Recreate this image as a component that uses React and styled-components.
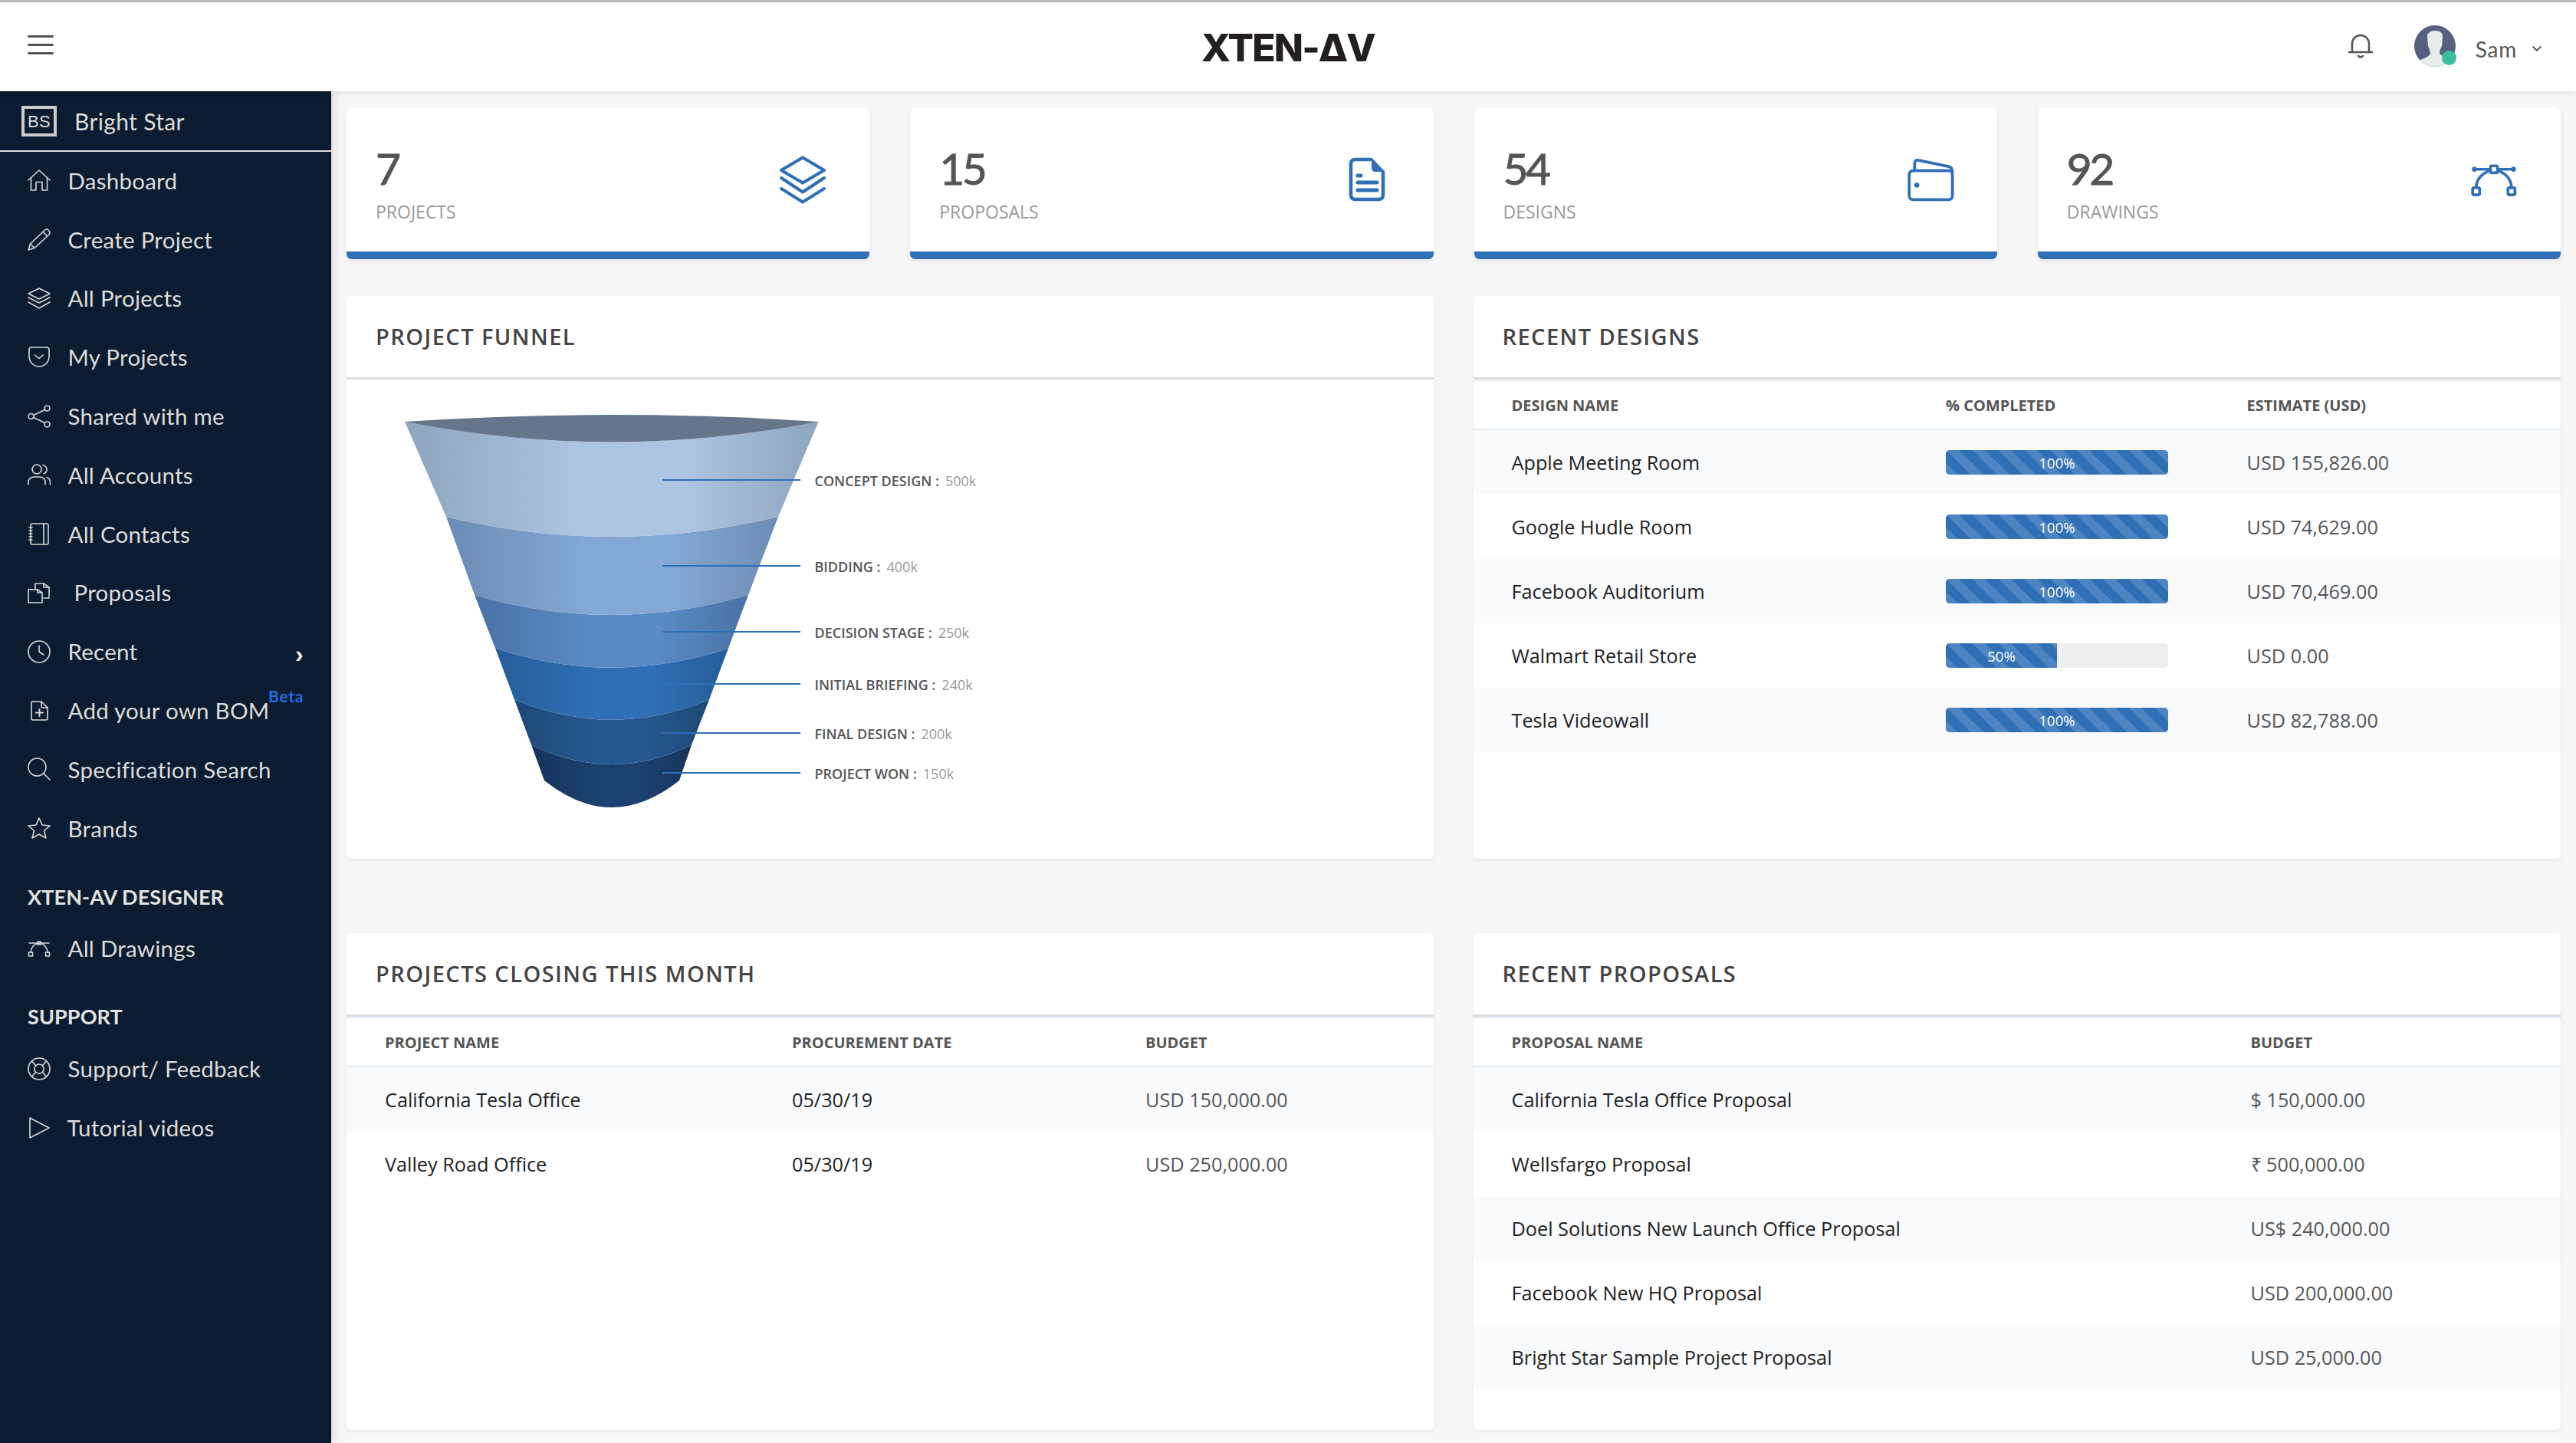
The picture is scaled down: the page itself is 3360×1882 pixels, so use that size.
import React from "react";
import styled, { createGlobalStyle } from "styled-components";

const Global = createGlobalStyle`
  html, body { margin: 0; padding: 0; background: #f7f7f7; }
  body { font-family: "Open Sans", "Liberation Sans", sans-serif; }
  * { box-sizing: border-box; }
`;

const BLUE = "#2f6fb6";
const NAVF = `"Lato", "Open Sans", sans-serif`;

const Page = styled.div`
  width: 3360px; height: 1882px; overflow: hidden;
  display: flex; flex-direction: column; background: #f7f7f7;
`;
const TopBar = styled.header`
  height: 119px; flex: none; background: #fff; border-top: 3px solid #b8b8b8;
  display: grid; grid-template-columns: 1fr auto 1fr; align-items: center;
  box-shadow: 0 2px 8px rgba(0,0,0,.1); position: relative; z-index: 2;
  padding: 0 36px;
`;
const Burger = styled.div`
  width: 34px; display: flex; flex-direction: column; gap: 8px; margin-top: -5px;
  span { display: block; height: 3px; border-radius: 2px; background: #555; }
`;
const Logo = styled.div`
  font-family: "Inter", "Liberation Sans", sans-serif; font-weight: 800; font-size: 50px;
  letter-spacing: -1.9px; color: #231f20; line-height: 1; margin-top: 2px;
  width: 224px; white-space: nowrap; display: flex; justify-content: center;
`;
const UserArea = styled.div`
  justify-self: end; display: flex; align-items: center; margin-right: 9px; margin-top: -3px;
`;
const AvatarWrap = styled.div`
  position: relative; width: 54px; height: 56px; margin-left: 53px; margin-right: 26px;
`;
const Online = styled.span`
  position: absolute; right: -1px; bottom: 3px; width: 19px; height: 19px; border-radius: 50%;
  background: #3bbf9c;
`;
const UserName = styled.span`
  font-family: ${NAVF}; font-size: 28px; color: #555; letter-spacing: .8px; margin-right: 20px; margin-top: 8px;
`;
const Body = styled.div`
  flex: 1; display: flex; min-height: 0;
`;
const Side = styled.aside`
  width: 432px; flex: none; background: #0c1c30; color: #dcdcdc; font-family: ${NAVF};
  box-shadow: 0 0 14px rgba(0,0,0,.18); position: relative; z-index: 1;
`;
const Brand = styled.div`
  height: 79px; display: flex; align-items: center; gap: 23px; padding-left: 28px;
  border-bottom: 2px solid #dcdcdc; font-size: 30px; letter-spacing: .35px;
`;
const BrandBox = styled.span`
  width: 46px; height: 40px; border: 4px solid #ccc; display: flex; align-items: center; justify-content: center;
  font-family: "Liberation Sans", sans-serif; font-size: 22px; padding-top: 3px; color: #ddd;
`;
const NavItem = styled.div`
  height: 76.8px; display: flex; align-items: center; padding: 0 0 2px 36px; font-size: 29.5px; letter-spacing: .25px;
  position: relative;
  svg { flex: none; }
`;
const NavLabel = styled.span`
  margin-left: ${p => 22.5 + (p.$indent || 0)}px; white-space: nowrap;
`;
const Chevron = styled.span`
  position: absolute; left: 385px; top: 23px; font-size: 32px; font-weight: 700; font-family: "Liberation Sans", sans-serif; color: #eee;
`;
const Beta = styled.span`
  position: absolute; left: 350px; top: 6px; font-size: 21px; font-weight: 700; color: #1f6fe8; letter-spacing: .7px;
`;
const SectionTitle = styled.div`
  height: 40px; line-height: 40px; padding-left: 36px; font-size: 27px; font-weight: 700; letter-spacing: .1px;
  margin-top: ${p => p.$top}px; margin-bottom: 10px; color: #e2e2e2;
`;
const Main = styled.main`
  flex: 1; padding: 21px 20px 0; min-width: 0;
`;
const StatRow = styled.div`
  display: grid; grid-template-columns: repeat(4, 1fr); column-gap: 53px; margin-bottom: 48px;
`;
const Stat = styled.section`
  height: 198px; background: #fff; border-bottom: 10px solid ${BLUE}; border-radius: 7px;
  box-shadow: 0 3px 6px rgba(0,0,0,.08);
  display: flex; align-items: center; justify-content: space-between; padding: 0 56px 0 38px;
`;
const StatNum = styled.div`
  font-family: "Lato", sans-serif; font-weight: 400; font-size: 57px; line-height: 1; color: #555; letter-spacing: -3.5px;
  -webkit-text-stroke: .9px #555; margin-top: 11px;
`;
const StatLabel = styled.div`
  font-size: 23px; color: #999; line-height: 1; margin-top: 17px;
`;
const IconSlot = styled.div`
  width: 62px; display: flex; justify-content: center; color: ${BLUE};
`;
const Grid = styled.div`
  display: grid; grid-template-columns: 1418px 1418px; grid-template-rows: 734px 648px; column-gap: 51.5px; row-gap: 97px;
`;
const Panel = styled.section`
  background: #fff; border-radius: 6px; box-shadow: 0 2px 5px rgba(0,0,0,.07); overflow: hidden;
`;
const PanelHead = styled.h2`
  margin: 0; padding: 0 38px 2px; display: flex; align-items: center; box-sizing: content-box; height: 104px;
  font-size: 29px; font-weight: 600; color: #444; letter-spacing: 1.45px; border-bottom: 3px solid #dedede;
`;
const Chart = styled.svg`
  display: block; width: 100%; height: 624px;
`;
const Cols = styled.div`
  display: grid; grid-template-columns: ${p => p.$cols}; padding-left: 50px; align-items: center;
`;
const THead = styled(Cols)`
  font-size: 20px; font-weight: 700; color: #555; border-top: 2px solid #e4edf5;
  border-bottom: 2px solid #e4edf5; height: 65.5px; padding-top: 1px;
`;
const TRow = styled(Cols)`
  height: 84px; font-size: 25.25px; color: #555;
  &:nth-child(odd) { background: #f9fafc; }
`;
const Name = styled.span`
  color: #222;
`;
const Bar = styled.div`
  width: 290px; height: 32px; background: #eee; border-radius: 5px; overflow: hidden; display: flex;
`;
const Fill = styled.div`
  height: 100%; background-color: ${BLUE}; color: #fff; font-size: 18.5px; line-height: 33px; text-align: center;
  background-image: linear-gradient(45deg, rgba(255,255,255,.15) 25%, transparent 25%, transparent 50%, rgba(255,255,255,.15) 50%, rgba(255,255,255,.15) 75%, transparent 75%, transparent);
  background-size: 34px 34px;
`;

const Ico = ({ children, w = 30, h = 30 }) => (
  <svg width={w} height={h} viewBox="0 0 30 30" fill="none" stroke="#d8d8d8" strokeWidth="1.6" strokeLinecap="round" strokeLinejoin="round">{children}</svg>
);
const navIcons = {
  home: <><path d="M1 15 L15 2 L29 15" /><path d="M4.5 12.5 V28 H11 V17.5 H19 V28 H25.5 V12.5" /></>,
  pencil: <><path d="M1 29 L3.5 21 L22.5 3 Q25 1 27 3 L28.5 5 Q30 7.5 27.5 9.5 L9 26.5 Z" /><path d="M3.5 21 L9 26.5 M20 5.5 L25.5 11" /></>,
  layers: <><path d="M15 2 L29 9 L15 16 L1 9 Z" /><path d="M1 14 L15 21 L29 14" /><path d="M1 20 L15 28 L29 20" /></>,
  pocket: <><path d="M5 2 H25 Q28 2 28 5 V14 A13 13 0 0 1 2 14 V5 Q2 2 5 2 Z" /><path d="M9.5 12 L15 16.5 L20.5 12" /></>,
  share: <><circle cx="25.5" cy="4.5" r="3.5" /><circle cx="4.5" cy="15" r="3.5" /><circle cx="25.5" cy="25.5" r="3.5" /><path d="M22.5 6.5 L7.5 13.5 M7.5 16.5 L22.5 23.5" /></>,
  users: <><circle cx="12" cy="8" r="6" /><path d="M1 28 V25 Q1 18 9 18 H15 Q23 18 23 25 V28" /><path d="M20 2.5 Q25 4 25 8 Q25 12 21 14" /><path d="M25 18.5 Q29.5 20.5 29.5 25 V28" /></>,
  contacts: <><rect x="4" y="2" width="23" height="27" rx="2" /><path d="M21 2 V29 M2 7 H6 M2 11 H6 M2 15 H6 M2 19 H6 M2 23 H6" /></>,
  files: <><path d="M1 11 H13 L19 15 V28 H1 Z" /><path d="M13 11 V15 H19" /><path d="M10 10 V3 H21 L28 8 V22 H21" /><path d="M21 3 V8 H28" /></>,
  clock: <><circle cx="15" cy="15" r="14" /><path d="M15 7 V15 L21 19" /></>,
  add: <><path d="M18 3 H7 Q5 3 5 5 V25 Q5 27 7 27 H24 Q26 27 26 25 V11" /><path d="M18 3 L26 11 H20 Q18 11 18 9 Z" /><path d="M15.5 13 V22 M11 17.5 H20" strokeWidth="2" /></>,
  search: <><circle cx="12.5" cy="12.5" r="11.5" /><path d="M21 21 L29 29" /></>,
  star: <path d="M15 2 L19 11 L29 12 L21.5 18.5 L24 28 L15 23 L6 28 L8.5 18.5 L1 12 L11 11 Z" />,
  bezier: <><path d="M4 20 C4.5 12 9 9 15 8 C21 9 25.5 12 26 20 M2 8 H28" /><rect x="1.5" y="20" width="5" height="5" /><rect x="23.5" y="20" width="5" height="5" /><rect x="13" y="6" width="4" height="4" /></>,
  buoy: <><circle cx="15" cy="15" r="14" /><circle cx="15" cy="15" r="6" /><path d="M5.5 5 L10.5 10.5 M24.5 5 L19.5 10.5 M5.5 25 L10.5 19.5 M24.5 25 L19.5 19.5" /></>,
  play: <path d="M3 2 L28 15 L3 28 Z" />,
};

const nav1 = [
  ["home", "Dashboard"], ["pencil", "Create Project"], ["layers", "All Projects"], ["pocket", "My Projects"],
  ["share", "Shared with me"], ["users", "All Accounts"], ["contacts", "All Contacts"], ["files", "Proposals", 8],
  ["clock", "Recent", 0, "chev"], ["add", "Add your own BOM", 0, "beta"], ["search", "Specification Search"], ["star", "Brands"],
];

const NavRow = ({ icon, label, indent, extra }) => (
  <NavItem>
    <Ico>{navIcons[icon]}</Ico>
    <NavLabel $indent={indent}>{label}</NavLabel>
    {extra === "chev" && <Chevron>›</Chevron>}
    {extra === "beta" && <Beta>Beta</Beta>}
  </NavItem>
);

const StackIcon = () => (
  <svg width="62" height="63" viewBox="0 0 62 63" fill="none" stroke="currentColor" strokeWidth="4" strokeLinecap="round" strokeLinejoin="round">
    <path d="M31 2.5 L59 19 L31 35.5 L3 19 Z" /><path d="M3 29 L31 47.5 L59 29" /><path d="M3 43 L31 60.5 L59 43" />
  </svg>
);
const DocIcon = () => (
  <svg width="48" height="58" viewBox="0 0 48 58" fill="none" stroke="currentColor" strokeWidth="4.5" strokeLinecap="round" strokeLinejoin="round">
    <path d="M29 3 H9 Q3 3 3 9 V49 Q3 55 9 55 H39 Q45 55 45 49 V19" />
    <path d="M31 3 L45 18 H35 Q31 18 31 14 Z" fill="currentColor" strokeWidth="2" />
    <path d="M12 24 H16 M12 33 H37 M12 43 H37" strokeWidth="5" />
  </svg>
);
const WalletIcon = () => (
  <svg width="66" height="60" viewBox="14 13 66 60" fill="none" stroke="currentColor" strokeWidth="4" strokeLinecap="round" strokeLinejoin="round">
    <rect x="17.5" y="31" width="60" height="40" rx="5" />
    <path d="M25 30 V21 Q25 15 31 16.5 L72 25 Q77 26 77.5 32" />
    <circle cx="28" cy="51" r="3.5" fill="currentColor" stroke="none" />
  </svg>
);
const BezierIcon = () => (
  <svg width="68" height="50" viewBox="14 18 68 50" fill="none" stroke="currentColor" strokeWidth="4" strokeLinejoin="round">
    <path d="M20 28.5 H76" />
    <circle cx="20" cy="28.5" r="3.5" fill="currentColor" stroke="none" />
    <circle cx="76" cy="28.5" r="3.5" fill="currentColor" stroke="none" />
    <path d="M22.5 55 C22.5 42 32 32 48 29 C64 32 73 42 73 55" />
    <rect x="43" y="23.5" width="10" height="10" rx="2" fill="#fff" />
    <rect x="17.5" y="55" width="10" height="10" rx="2" fill="#fff" />
    <rect x="68" y="55" width="10" height="10" rx="2" fill="#fff" />
  </svg>
);

const stats = [
  ["7", "PROJECTS", <StackIcon />], ["15", "PROPOSALS", <DocIcon />],
  ["54", "DESIGNS", <WalletIcon />], ["92", "DRAWINGS", <BezierIcon />],
];

const segs = [
  { id: "s6", d: "M693 971.5 Q798 1022.5 902 971.5 L886 1018 Q798 1088 710 1018 Z", c: "#1b4170", e: "#16345b" },
  { id: "s5", d: "M671 912.5 Q798 965 925 912.5 L902 971.5 Q798 1022.5 693 971.5 Z", c: "#25588f", e: "#1e4875" },
  { id: "s4", d: "M646 845.6 Q798 896 950 845.6 L925 912.5 Q798 965 671 912.5 Z", c: "#2f6fb6", e: "#275c98" },
  { id: "s3", d: "M619 776 Q798 828 976 776 L950 845.6 Q798 896 646 845.6 Z", c: "#5a8ac6", e: "#4a72a5" },
  { id: "s2", d: "M582 674 Q798 726 1015 674 L976 776 Q798 828 619 776 Z", c: "#84a8d5", e: "#6b8cb3" },
  { id: "s1", d: "M528 550 Q798 603 1067.5 550 L1015 674 Q798 726 582 674 Z", c: "#adc4e2", e: "#8ea5bf" },
];
const funnelLabels = [
  [626, "CONCEPT DESIGN :", "500k"], [738, "BIDDING :", "400k"], [824, "DECISION STAGE :", "250k"],
  [892, "INITIAL BRIEFING :", "240k"], [956, "FINAL DESIGN :", "200k"], [1008, "PROJECT WON :", "150k"],
];

const Funnel = () => (
  <Chart viewBox="452 495 1418 624">
    <defs>
      {segs.map(s => (
        <linearGradient key={s.id} id={s.id}>
          <stop offset="0" stopColor={s.e} /><stop offset=".42" stopColor={s.c} />
          <stop offset=".68" stopColor={s.c} /><stop offset="1" stopColor={s.e} />
        </linearGradient>
      ))}
    </defs>
    {segs.map(s => <path key={s.id} d={s.d} fill={`url(#${s.id})`} />)}
    <path d="M528 550 Q798 532 1067.5 550 Q798 603 528 550 Z" fill="#65768a" />
    {funnelLabels.map(([y, l, v]) => (
      <g key={l}>
        <line x1="864" x2="1044" y1={y} y2={y} stroke={BLUE} strokeWidth="2" />
        <text x="1062.5" y={y + 7.5} fontFamily="Open Sans" fontSize="18" fontWeight="600" fill="#555">
          {l}<tspan dx="8" fontWeight="400" fill="#999">{v}</tspan>
        </text>
      </g>
    ))}
  </Chart>
);

const Progress = ({ v }) => (
  <Bar><Fill style={{ width: `${v}%` }}>{v}%</Fill></Bar>
);

const designs = [
  ["Apple Meeting Room", 100, "USD 155,826.00"], ["Google Hudle Room", 100, "USD 74,629.00"],
  ["Facebook Auditorium", 100, "USD 70,469.00"], ["Walmart Retail Store", 50, "USD 0.00"], ["Tesla Videowall", 100, "USD 82,788.00"],
];
const closing = [["California Tesla Office", "05/30/19", "USD 150,000.00"], ["Valley Road Office", "05/30/19", "USD 250,000.00"]];
const proposals = [
  ["California Tesla Office Proposal", "$ 150,000.00"], ["Wellsfargo Proposal", "₹ 500,000.00"],
  ["Doel Solutions New Launch Office Proposal", "US$ 240,000.00"], ["Facebook New HQ Proposal", "USD 200,000.00"],
  ["Bright Star Sample Project Proposal", "USD 25,000.00"],
];

const Rows = styled.div``;

export default function App() {
  const designCols = "566.5px 392.5px 1fr";
  const closingCols = "531px 461px 1fr";
  const propCols = "964px 1fr";
  return (
    <Page>
      <Global />
      <TopBar>
        <Burger><span /><span /><span /></Burger>
        <Logo>XTEN-ΔV</Logo>
        <UserArea>
          <svg width="34" height="36" viewBox="0 0 34 36" fill="none" stroke="#555" strokeWidth="2.5" strokeLinecap="round" strokeLinejoin="round">
            <path d="M2 26 H32 M6 26 V15 A11 11 0 0 1 28 15 V26" /><path d="M14 31 Q17 34 20 31" />
          </svg>
          <AvatarWrap>
            <svg width="54" height="56" viewBox="0 0 54 56">
              <defs><clipPath id="av"><circle cx="27" cy="28" r="27" /></clipPath></defs>
              <circle cx="27" cy="28" r="27" fill="#556080" />
              <g clipPath="url(#av)">
                <path d="M17 14 Q19 8 27 8 Q36 8 37 14 L36 28 Q33 34 33 38 Q37 42 54 46 V60 H0 V48 Q18 44 21 38 Q21 34 18 28 Z" fill="#e7eceb" />
              </g>
            </svg>
            <Online />
          </AvatarWrap>
          <UserName>Sam</UserName>
          <svg width="12" height="8" viewBox="0 0 12 8" fill="none" stroke="#555" strokeWidth="1.8" strokeLinecap="round" style={{ marginTop: 8 }}><path d="M1 1 L6 6 L11 1" /></svg>
        </UserArea>
      </TopBar>
      <Body>
        <Side>
          <Brand><BrandBox>BS</BrandBox>Bright Star</Brand>
          {nav1.map(([i, l, ind, ex]) => <NavRow key={l} icon={i} label={l} indent={ind} extra={ex} />)}
          <SectionTitle $top={30}>XTEN-AV DESIGNER</SectionTitle>
          <NavRow icon="bezier" label="All Drawings" />
          <SectionTitle $top={30}>SUPPORT</SectionTitle>
          <NavRow icon="buoy" label="Support/ Feedback" />
          <NavRow icon="play" label="Tutorial videos" indent={-1} />
        </Side>
        <Main>
          <StatRow>
            {stats.map(([n, l, ic]) => (
              <Stat key={l}>
                <div><StatNum>{n}</StatNum><StatLabel>{l}</StatLabel></div>
                <IconSlot>{ic}</IconSlot>
              </Stat>
            ))}
          </StatRow>
          <Grid>
            <Panel>
              <PanelHead>PROJECT FUNNEL</PanelHead>
              <Funnel />
            </Panel>
            <Panel>
              <PanelHead>RECENT DESIGNS</PanelHead>
              <THead $cols={designCols}><span>DESIGN NAME</span><span>% COMPLETED</span><span>ESTIMATE (USD)</span></THead>
              <Rows>
                {designs.map(([n, v, e]) => (
                  <TRow key={n} $cols={designCols}><Name>{n}</Name><Progress v={v} /><span>{e}</span></TRow>
                ))}
              </Rows>
            </Panel>
            <Panel>
              <PanelHead>PROJECTS CLOSING THIS MONTH</PanelHead>
              <THead $cols={closingCols}><span>PROJECT NAME</span><span>PROCUREMENT DATE</span><span>BUDGET</span></THead>
              <Rows>
                {closing.map(([n, d, b]) => (
                  <TRow key={n} $cols={closingCols}><Name>{n}</Name><Name>{d}</Name><span>{b}</span></TRow>
                ))}
              </Rows>
            </Panel>
            <Panel>
              <PanelHead>RECENT PROPOSALS</PanelHead>
              <THead $cols={propCols}><span>PROPOSAL NAME</span><span>BUDGET</span></THead>
              <Rows>
                {proposals.map(([n, b]) => (
                  <TRow key={n} $cols={propCols}><Name>{n}</Name><span>{b}</span></TRow>
                ))}
              </Rows>
            </Panel>
          </Grid>
        </Main>
      </Body>
    </Page>
  );
}
